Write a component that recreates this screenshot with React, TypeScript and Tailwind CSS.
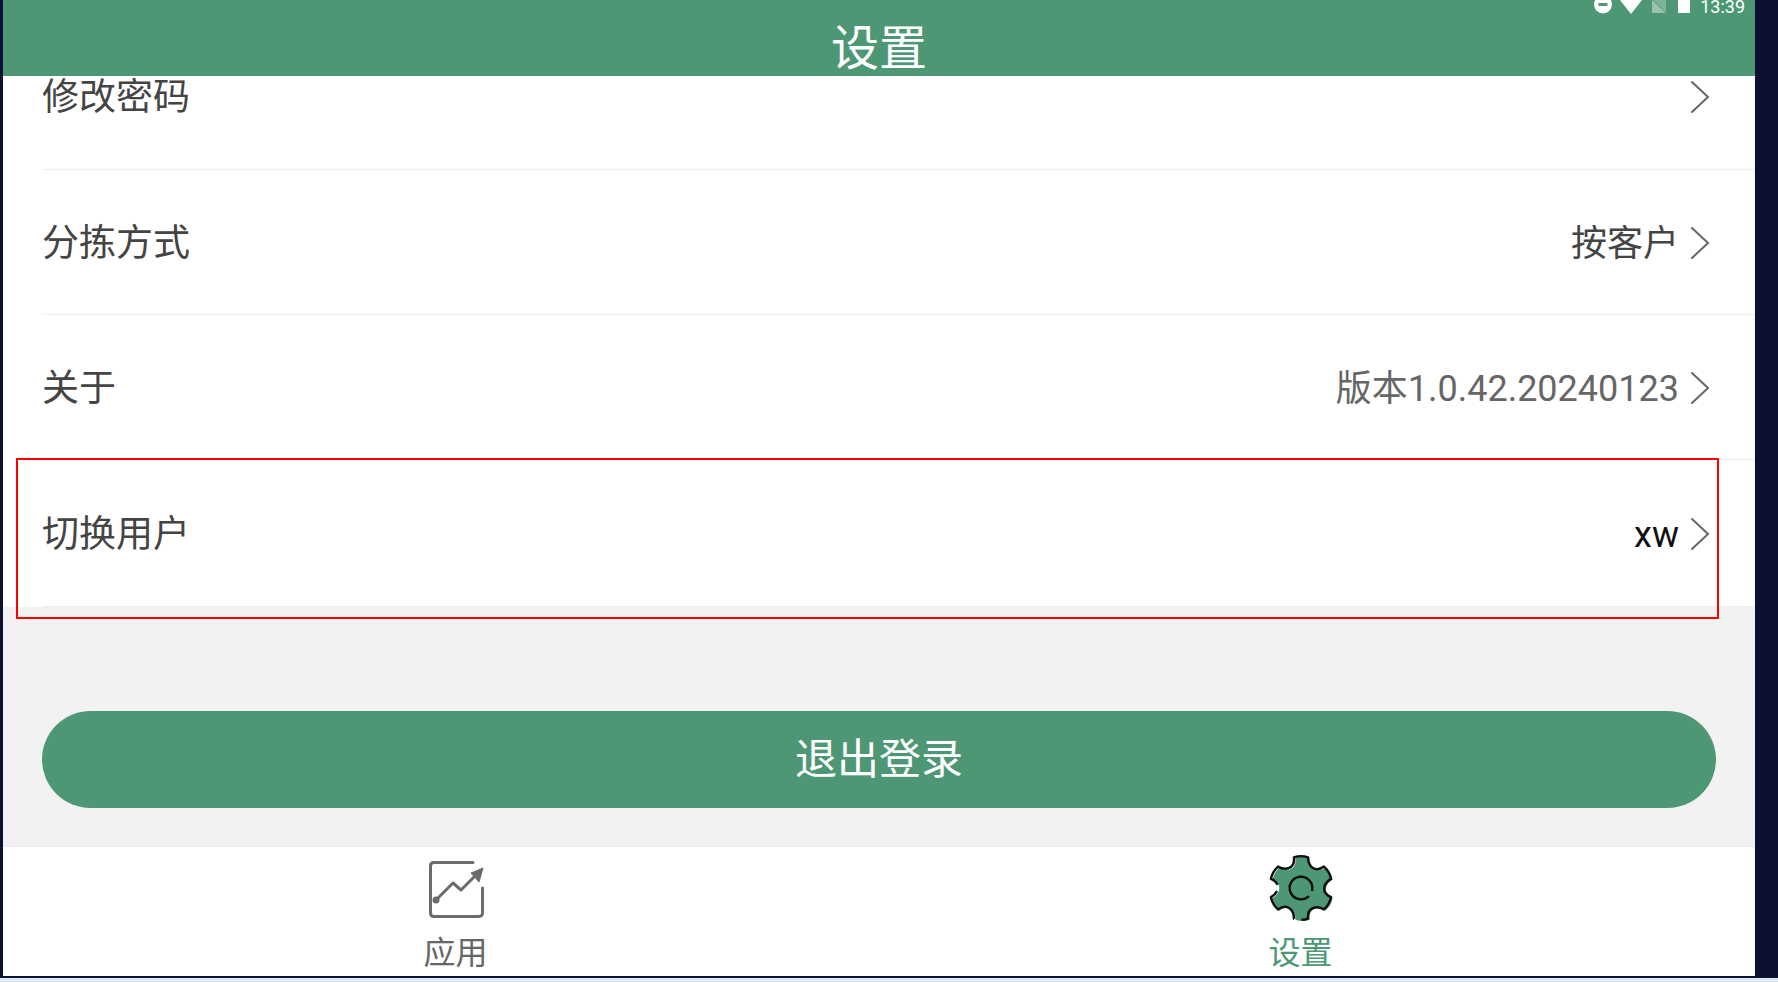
const font = { fontFamily: 'Roboto, "Noto Sans CJK SC", sans-serif' };

function Chevron() {
  return (
    <svg width="20" height="34" viewBox="0 0 20 34" className="ml-[11px] mt-[2px] shrink-0">
      <path d="M2 2 L18 17 L2 32" fill="none" stroke="#666" strokeWidth="2" strokeLinecap="round" strokeLinejoin="miter" />
    </svg>
  );
}

function Row({ label, value, valueClass, rowClass }: { label: string; value?: string; valueClass?: string; rowClass: string }) {
  return (
    <div className={`flex items-center ml-[39px] pr-[45px] border-b border-[#eeeeee] ${rowClass}`}>
      <span className="text-[37px] leading-[50px] mt-[4px] text-[#444444] flex-1">{label}</span>
      {value && <span className={`text-[36px] leading-[50px] mt-[4px] ${valueClass}`}>{value}</span>}
      <Chevron />
    </div>
  );
}

function AppIcon() {
  return (
    <svg width="58" height="59" viewBox="0 0 58 59" className="ml-[2px]">
      <path d="M45 2.5 H6 Q2.5 2.5 2.5 6 V53 Q2.5 56.5 6 56.5 H50 Q54.5 56.5 54.5 53 V28" fill="none" stroke="#6b6b6b" strokeWidth="3" strokeLinecap="round" />
      <circle cx="8" cy="40" r="3.5" fill="#6b6b6b" />
      <path d="M8 40 L25 23 L33 30 L47 16" fill="none" stroke="#6b6b6b" strokeWidth="3" strokeLinecap="round" strokeLinejoin="round" />
      <path d="M43 13 L55 8 L51 22 Z" fill="#6b6b6b" stroke="#6b6b6b" strokeWidth="1" strokeLinejoin="round" />
    </svg>
  );
}

function gearPath() {
  const p = (r: number, deg: number) => {
    const a = (deg * Math.PI) / 180;
    return `${(33 + r * Math.cos(a)).toFixed(2)} ${(33 + r * Math.sin(a)).toFixed(2)}`;
  };
  let d = "";
  for (let i = 0; i < 6; i++) {
    const a = -90 + 60 * i;
    d += `${i === 0 ? "M" : "L"}${p(30.5, a - 13)} Q${p(32, a)} ${p(30.5, a + 13)} C${p(23, a + 17)} ${p(19, a + 43)} ${p(30.5, a + 47)} `;
  }
  return d + "Z";
}

function GearIcon() {
  const d = gearPath();
  return (
    <svg width="68" height="68" viewBox="0 0 66 66">
      <path d={d} fill="#4d9774" transform="translate(1.5 1)" />
      <path d={d} fill="none" stroke="#111" strokeWidth="2.4" strokeLinejoin="round" strokeDasharray="118 7 46 6" />
      <path d="M40.07 41.43 A11 11 0 1 1 43.83 34.91" fill="none" stroke="#111" strokeWidth="2.4" strokeLinecap="round" />
    </svg>
  );
}

function StatusIcons() {
  return (
    <div className="absolute top-0 right-[10px] h-[20px] flex items-start">
      <svg width="18" height="14" viewBox="0 0 18 14" className="mr-[8px]">
        <circle cx="9" cy="4.5" r="9" fill="#fff" />
        <rect x="4.5" y="3" width="9" height="3" fill="#4d9774" />
      </svg>
      <svg width="22" height="14" viewBox="0 0 22 14" className="mr-[10px]"><path d="M0 0 H22 L11 14 Z" fill="#fff" /></svg>
      <svg width="14" height="14" viewBox="0 0 14 14" className="mr-[12px]">
        <path d="M0 0 L14 13 H0 Z" fill="#fff" opacity="0.42" />
        <path d="M1 0 H14 V12 Z" fill="#fff" opacity="0.28" />
      </svg>
      <div className="w-[12px] h-[13px] bg-white mr-[10px]" />
      <span className="text-white text-[18px] leading-[13px]" style={{ fontFamily: "Roboto, sans-serif" }}>13:39</span>
    </div>
  );
}

export default function App() {
  return (
    <div className="w-[1778px] h-[982px] bg-[#0c1033] overflow-hidden flex flex-col relative" style={font}>
      <div className="ml-[3px] mr-[23px] h-[976px] bg-[#f2f2f2] flex flex-col">
        <header className="relative h-[76px] shrink-0 bg-[#4d9774] flex items-center justify-center">
          <span className="text-white text-[48px] leading-[60px] mt-[18px] h-[56px]">设置</span>
          <StatusIcons />
        </header>
        <div className="bg-white">
          <Row label="修改密码" rowClass="h-[94px] pb-[54px]" />
          <Row label="分拣方式" value="按客户" valueClass="text-[#444444]" rowClass="h-[145px]" />
          <Row label="关于" value="版本1.0.42.20240123" valueClass="text-[#666666]" rowClass="h-[145px]" />
          <Row label="切换用户" value="xw" valueClass="text-[#111111]" rowClass="h-[147px]" />
        </div>
        <div className="flex-1 pl-[39px] pt-[104px]">
          <button className="w-[1674px] h-[97px] rounded-full bg-[#4d9774] text-white text-[42px] flex items-center justify-center">退出登录</button>
        </div>
        <nav className="h-[130px] shrink-0 bg-white border-t border-[#ececec] grid grid-cols-2 pl-[30px] pr-[32px]">
          <div className="flex flex-col items-center pt-[9px]">
            <div className="h-[66px] flex items-center"><AppIcon /></div>
            <span className="text-[32px] leading-[40px] mt-[11px] text-[#666666]">应用</span>
          </div>
          <div className="flex flex-col items-center pt-[8px]">
            <div className="h-[66px] flex items-center"><GearIcon /></div>
            <span className="text-[32px] leading-[40px] mt-[12px] text-[#4d9774]">设置</span>
          </div>
        </nav>
      </div>
      <div className="h-[2px] bg-[#0c1033]" />
      <div className="flex-1 bg-[#dfe8f6]" />
      <div className="absolute left-[16px] top-[458px] w-[1703px] h-[161px] border-2 border-[#ff0000] pointer-events-none" />
    </div>
  );
}
